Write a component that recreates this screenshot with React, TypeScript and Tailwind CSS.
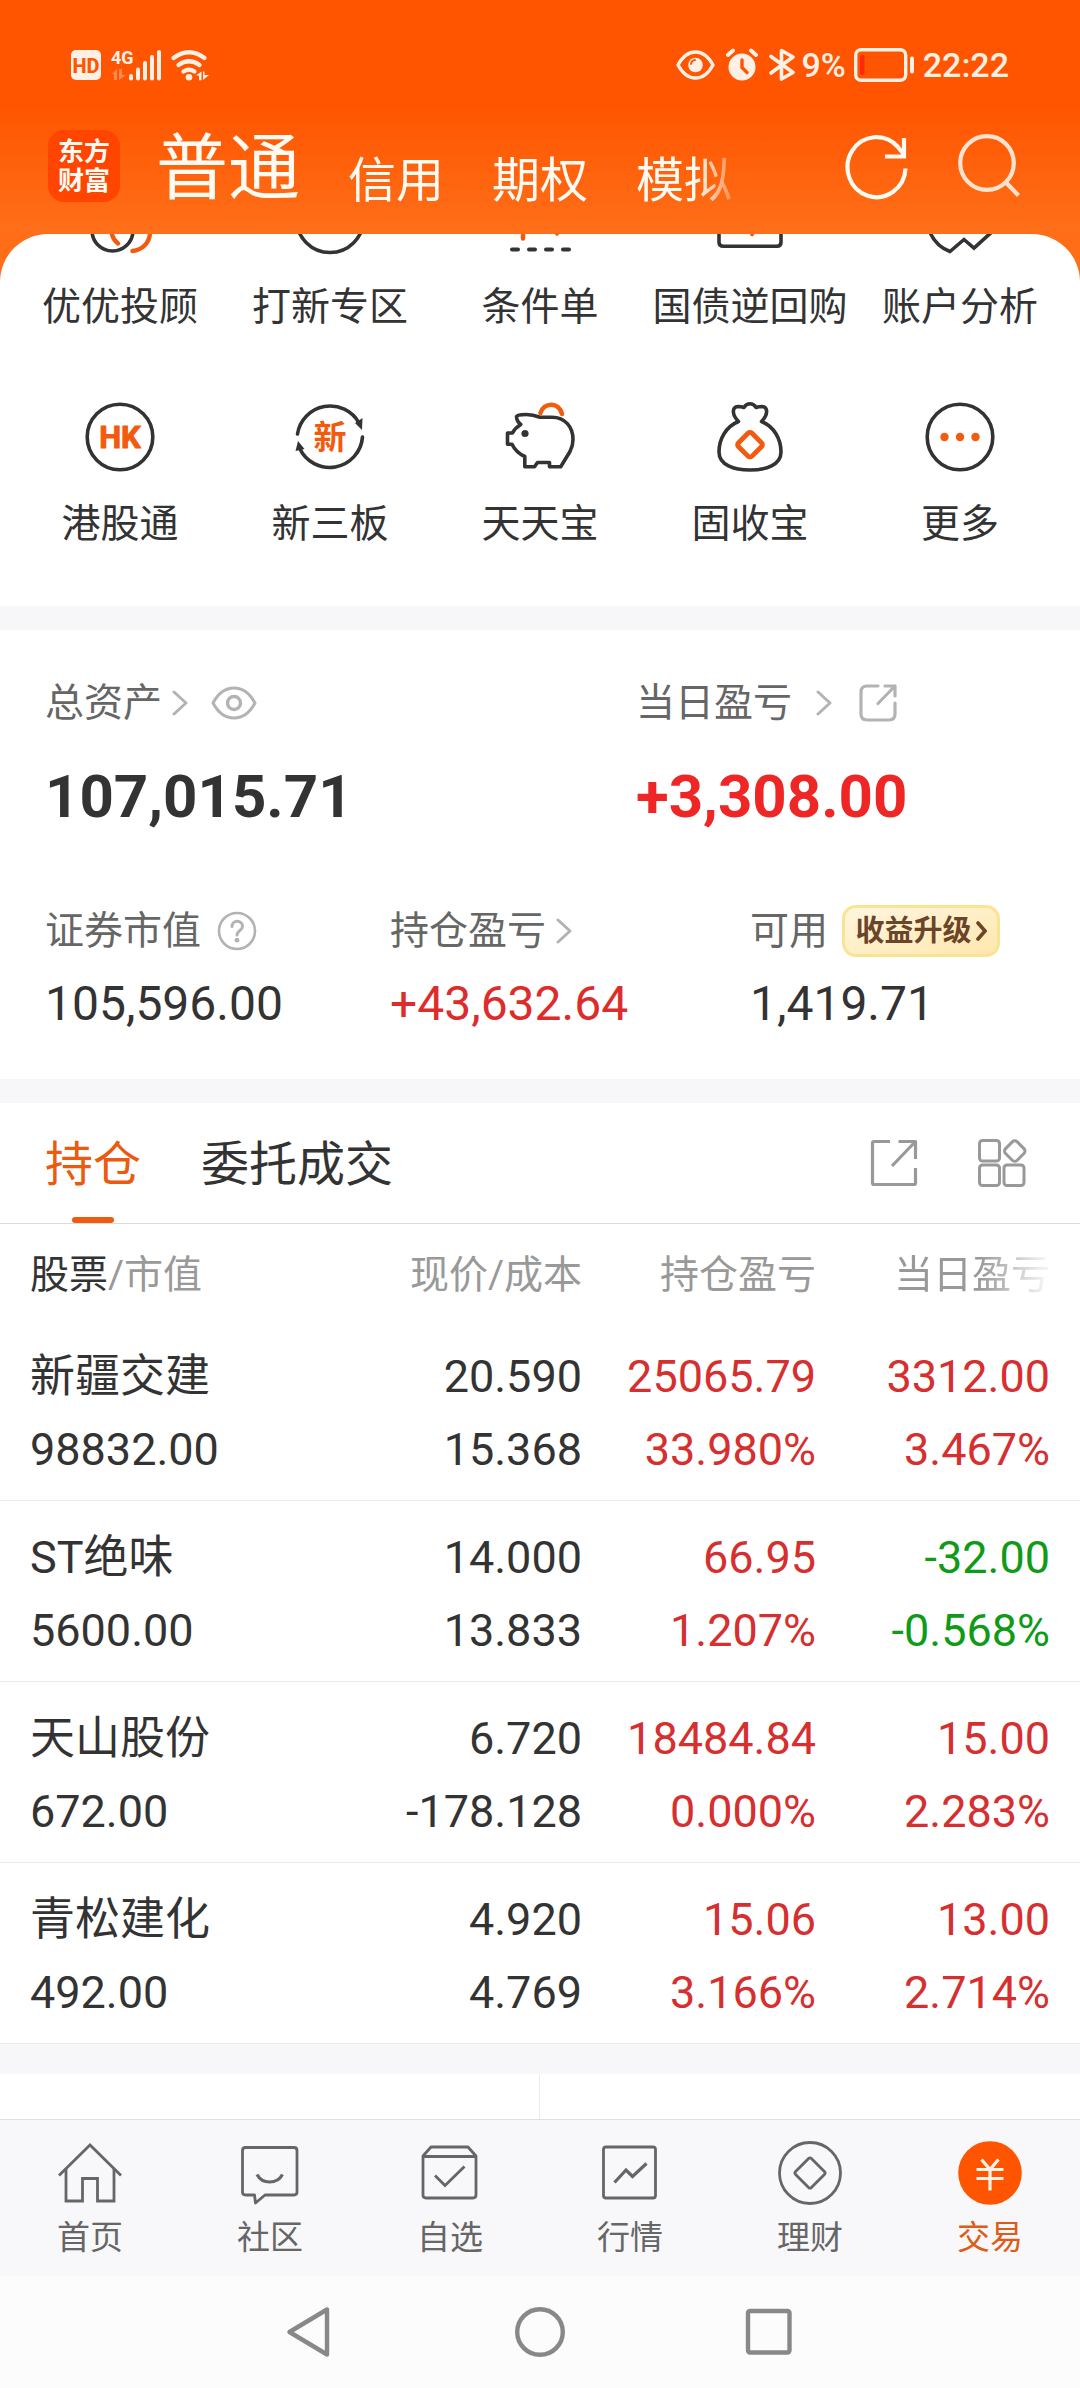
import React, { ReactNode } from "react";

const INK = "#333333";
const ORANGE = "#f25a0e";

/* ---------- status bar ---------- */

function StatusBar() {
  return (
    <div className="flex h-8 items-center justify-between pr-[71px] pl-[71px] text-[34px] leading-8 font-medium text-[#fff0e6]">
      <div className="flex items-center">
        <svg className="overflow-visible" width="138" height="32" viewBox="0 0 138 32" fill="#fff0e6" aria-label="HD 4G">
          <rect x="0" y="1" width="30" height="30" rx="5" />
          <text x="15" y="23.5" textAnchor="middle" fontFamily="Roboto" fontWeight="800" fontSize="20" fill="#ff5500">HD</text>
          <text x="40" y="15" fontFamily="Roboto" fontWeight="700" fontSize="18">4G</text>
          <g opacity="0.35">
            <path d="M41 25l5-5v11h-3v-6zM48 20h3v6h4l-7 5z" />
          </g>
          <rect x="58" y="25" width="4" height="6.5" rx="2" />
          <rect x="65" y="18.5" width="4" height="13" rx="2" />
          <rect x="72" y="12" width="4" height="19.5" rx="2" />
          <rect x="79" y="6" width="4" height="25.5" rx="2" />
          <rect x="86" y="1" width="4" height="30.5" rx="2" />
          <g fill="none" stroke="#fff0e6" strokeWidth="4.2" strokeLinecap="round">
            <path d="M102.5 9Q118 -2.5 133.5 9" />
            <path d="M107.500 16Q118 8.5 128.5 16" />
            <path d="M112.500 22.5Q118 19 123.5 22.5" />
          </g>
          <circle cx="118" cy="28.3" r="3.3" />
          <path d="M125 26.5l5.5-4v8.8h-2.5v-4.8zM132 22.5h1.5v3.500h4.5l-6 5z" />
        </svg>
      </div>
      <div className="flex items-center">
        <svg width="119" height="34" viewBox="0 0 119 34" aria-label="状态">
          <path d="M2 17Q9 4 19.5 4T37 17Q30 30 19.5 30T2 17z" fill="none" stroke="#fff0e6" strokeWidth="3.4" strokeLinejoin="round" />
          <circle cx="19.5" cy="17" r="7.3" fill="#fff0e6" />
          <path d="M15 16a4.5 4.5 0 0 1 4-4" fill="none" stroke="#ff5500" strokeWidth="1.8" strokeLinecap="round" />
          <circle cx="66" cy="19" r="13.5" fill="#fff0e6" />
          <path d="M52 7l5-4.5M80 7l-5-4.5" stroke="#fff0e6" strokeWidth="4" strokeLinecap="round" />
          <path d="M66 12v7.5l5 5" fill="none" stroke="#ff5500" strokeWidth="3.4" strokeLinecap="round" />
          <path d="M95 8.5l22 16L105.5 31V2.5L117 9 95 25" fill="none" stroke="#fff0e6" strokeWidth="3.6" strokeLinejoin="round" strokeLinecap="round" />
        </svg>
        <span className="ml-1.5">9%</span>
        <svg className="mr-2 ml-2" width="61" height="34" viewBox="0 0 61 34" aria-label="电池">
          <rect x="1.7" y="1.7" width="50" height="30.6" rx="5.5" fill="none" stroke="#fff0e6" strokeWidth="3.4" />
          <rect x="6" y="7" width="4.5" height="20" rx="2" fill="#ff2a0a" />
          <rect x="56" y="8.5" width="4" height="17" rx="2" fill="#fff0e6" />
        </svg>
        <span>22:22</span>
      </div>
    </div>
  );
}

function Header() {
  return (
    <header className="bg-[linear-gradient(to_bottom,#ff5500_45%,#ff6f19_100%)] pt-[49px]">
      <StatusBar />
      <div className="mt-[49px] flex h-[104px] items-start pr-[59px] pl-12 text-[#fffaf2]">
        <a href="#home" className="flex size-[72px] shrink-0 items-center justify-center rounded-[16px] bg-[#ff4500] pb-1 font-['Noto_Sans_CJK_SC',sans-serif] text-[26px] leading-[29px] font-bold">
          <span className="w-[52px] break-all">东方财富</span>
        </a>
        <nav className="ml-9 flex h-[75px] w-[580px] items-end gap-12 whitespace-nowrap [mask-image:linear-gradient(to_right,#000_540px,transparent_590px)]">
          <button className="text-[72px] leading-[72px]">普通</button>
          <button className="text-[48px] leading-[48px]">信用</button>
          <button className="text-[48px] leading-[48px]">期权</button>
          <button className="text-[48px] leading-[48px]">模拟</button>
        </nav>
        <div className="ml-auto flex items-center gap-12 pt-1">
          <button aria-label="刷新">
            <svg width="64" height="66" viewBox="0 0 64 66" fill="none" stroke="#fffaf2" strokeWidth="4.2">
              <path d="M60.500 34.5A29 30 0 1 1 53 13L58.500 20" />
              <path d="M59 4v18.500H40" />
            </svg>
          </button>
          <button aria-label="搜索">
            <svg width="64" height="66" viewBox="0 0 64 66" fill="none" stroke="#ffe3cf" strokeWidth="4.2">
              <circle cx="30" cy="29" r="26.8" />
              <path d="M48.5 48L61.5 61.5" />
            </svg>
          </button>
        </div>
      </div>
    </header>
  );
}

/* ---------- shortcut grid ---------- */

function ClippedIcon({ children }: { children: ReactNode }) {
  return (
    <svg width="72" height="21" viewBox="0 0 72 21" fill="none" stroke={INK} strokeWidth="3.6" strokeLinecap="round" strokeLinejoin="round" aria-hidden="true">
      {children}
    </svg>
  );
}

function GridIcon({ children }: { children: ReactNode }) {
  return (
    <svg width="72" height="72" viewBox="0 0 72 72" fill="none" stroke={INK} strokeWidth="3.6" strokeLinecap="round" strokeLinejoin="round" aria-hidden="true">
      {children}
    </svg>
  );
}

const topShortcuts: { label: string; icon: ReactNode }[] = [
  {
    label: "优优投顾",
    icon: (
      <ClippedIcon>
        <path d="M66 -2C66 9 58 16 48.5 17" stroke={ORANGE} strokeWidth="4.4" />
        <path d="M27.5 -2Q28.5 5.5 34 9.5" stroke={ORANGE} strokeWidth="4.4" />
        <circle cx="28.5" cy="-3.5" r="20.5" />
      </ClippedIcon>
    ),
  },
  {
    label: "打新专区",
    icon: (
      <ClippedIcon>
        <circle cx="36" cy="-15" r="33.5" />
      </ClippedIcon>
    ),
  },
  {
    label: "条件单",
    icon: (
      <ClippedIcon>
        <path d="M19 -4v8.500M53 -4v3.500" stroke={ORANGE} strokeWidth="4.5" />
        <path d="M8 15.5h6M25 15.5h6M42 15.5h6M59 15.5h6" strokeWidth="4" />
      </ClippedIcon>
    ),
  },
  {
    label: "国债逆回购",
    icon: (
      <ClippedIcon>
        <path d="M5 -4V8Q5 12.2 9.5 12.2H63Q67 12.2 67 8V-4" />
        <path d="M41 -3l-3 3.500" stroke={ORANGE} />
      </ClippedIcon>
    ),
  },
  {
    label: "账户分析",
    icon: (
      <ClippedIcon>
        <path d="M5 -4Q11 12 26 17.500L40 5.5 50 14 70 -4" strokeLinejoin="miter" />
      </ClippedIcon>
    ),
  },
];

const shortcuts: { label: string; icon: ReactNode }[] = [
  {
    label: "港股通",
    icon: (
      <GridIcon>
        <circle cx="36" cy="36" r="32.8" />
        <text x="36" y="47" textAnchor="middle" fontFamily="Roboto" fontWeight="700" fontSize="31" fill={ORANGE} stroke={ORANGE} strokeWidth="1">HK</text>
      </GridIcon>
    ),
  },
  {
    label: "新三板",
    icon: (
      <GridIcon>
        <path d="M3.5 33A33 33 0 0 1 65 22M68.5 36A33 33 0 0 1 5.5 47" />
        <path d="M61 22l7.500-5-.5 12zM1.500 50l2.500-10 6.500 8z" fill={INK} stroke="none" />
        <text x="36" y="47.5" textAnchor="middle" fontFamily="Noto Sans CJK SC" fontWeight="700" fontSize="33" fill={ORANGE} stroke="none">新</text>
      </GridIcon>
    ),
  },
  {
    label: "天天宝",
    icon: (
      <GridIcon>
        <path d="M36 16.2Q29 13.5 22 13.5 12.5 13.5 12.5 15.5 12.5 20 16.7 23.5 11 27 8.5 32H3.500V43.2H8Q12 51.5 20.8 55.5V65.7H30.500L33.500 61.5H45.500V65.7H56.700L66 50.500Q69 45 69 38.500C69 26 61 16.2 48 16.2z" />
        <path d="M36.5 12C39.5 1 55 0.5 58 13" stroke={ORANGE} strokeWidth="4.6" />
        <circle cx="21" cy="32.5" r="3.6" fill={INK} stroke="none" />
      </GridIcon>
    ),
  },
  {
    label: "固收宝",
    icon: (
      <GridIcon>
        <path d="M24.5 20.5C18 14 17.5 6 24 5.5Q27 5.5 30 6.5 32 2.8 36 2.8T42 6.5Q45 5.5 48 5.5C54.5 6 54 14 47.5 20.5C60 25.5 67 38 67 51C67 64 52 69 36 69S5 64 5 51C5 38 12 25.5 24.5 20.5z" />
        <rect x="26.5" y="34.2" width="19" height="19" rx="2.5" transform="rotate(45 36 43.7)" stroke={ORANGE} strokeWidth="4.8" />
      </GridIcon>
    ),
  },
  {
    label: "更多",
    icon: (
      <GridIcon>
        <circle cx="36" cy="36" r="32.8" />
        <g fill={ORANGE} stroke="none">
          <circle cx="20.5" cy="36" r="4.2" />
          <circle cx="36" cy="36" r="4.2" />
          <circle cx="51.5" cy="36" r="4.2" />
        </g>
      </GridIcon>
    ),
  },
];

function Shortcuts() {
  return (
    <section className="overflow-hidden rounded-t-[48px] bg-white px-[15px] pb-[58px] text-[39px] leading-12 text-[#333]">
      <div className="grid grid-cols-5">
        {topShortcuts.map((s) => (
          <button key={s.label} className="flex flex-col items-center gap-7 whitespace-nowrap">
            {s.icon}
            <span>{s.label}</span>
          </button>
        ))}
      </div>
      <div className="mt-[70px] grid grid-cols-5">
        {shortcuts.map((s) => (
          <button key={s.label} className="flex flex-col items-center gap-[27px] whitespace-nowrap">
            {s.icon}
            <span>{s.label}</span>
          </button>
        ))}
      </div>
    </section>
  );
}

/* ---------- asset summary ---------- */

function Chevron() {
  return (
    <svg width="16" height="28" viewBox="0 0 16 28" fill="none" stroke="#b3b3b3" strokeWidth="3" strokeLinecap="round" strokeLinejoin="round" aria-hidden="true">
      <path d="M2 3l12 11L2 25" />
    </svg>
  );
}

function Summary() {
  return (
    <section className="bg-white pt-[49px] pb-[51px] pl-[45px] text-[39px] leading-12 text-[#666]">
      <div className="grid grid-cols-[591fr_444fr]">
        <div>
          <div className="flex h-12 items-center">
            <button className="flex items-center gap-[10px]">
              总资产 <Chevron />
            </button>
            <button aria-label="隐藏金额" className="ml-[23px]">
              <svg width="46" height="34" viewBox="0 0 46 34" fill="none" stroke="#b3b3b3" strokeWidth="3">
                <path d="M2 17Q10 2 23 2T44 17Q36 32 23 32T2 17z" strokeLinejoin="round" />
                <circle cx="23" cy="17" r="6.5" strokeWidth="3.4" />
              </svg>
            </button>
          </div>
          <p className="mt-10 text-[60px] leading-[60px] font-bold text-[#333]">107,015.71</p>
        </div>
        <div>
          <div className="flex h-12 items-center">
            <button className="flex items-center gap-6">
              当日盈亏 <Chevron />
            </button>
            <button aria-label="分享盈亏" className="ml-[26px]">
              <svg width="40" height="40" viewBox="0 0 40 40" fill="none" stroke="#b3b3b3" strokeWidth="3.2" strokeLinecap="round" strokeLinejoin="round">
                <path d="M20 3H9Q3 3 3 9V31Q3 37 9 37H31Q37 37 37 31V20" />
                <path d="M27 3H37V13M37 3L20 20.5" />
              </svg>
            </button>
          </div>
          <p className="mt-10 text-[60px] leading-[60px] font-bold text-[#ee2626]">+3,308.00</p>
        </div>
      </div>

      <div className="mt-[78px] grid grid-cols-[345fr_360fr_330fr]">
        <div>
          <div className="flex h-[52px] items-center">
            证券市值
            <button aria-label="说明" className="ml-4">
              <svg width="40" height="40" viewBox="0 0 40 40" fill="none" stroke="#b3b3b3" strokeWidth="2.6" strokeLinecap="round" strokeLinejoin="round">
                <circle cx="20" cy="20" r="18" />
                <path d="M15 15.5C15 8.5 25.5 8.5 25.5 15.5C25.5 19.5 20 19.5 20 24" strokeWidth="3" />
                <circle cx="20" cy="29.2" r="2.4" fill="#b3b3b3" stroke="none" />
              </svg>
            </button>
          </div>
          <p className="mt-[23px] text-[48px] text-[#333]">105,596.00</p>
        </div>
        <div>
          <button className="flex h-[52px] items-center gap-[10px]">
            持仓盈亏 <Chevron />
          </button>
          <p className="mt-[23px] text-[48px] text-[#dd2c2c]">+43,632.64</p>
        </div>
        <div>
          <div className="flex h-[52px] items-center">
            可用
            <button className="ml-[14px] flex h-[52px] w-[158px] items-center justify-center gap-1 rounded-[14px] border-3 border-[#f9e494] bg-linear-to-br from-[#fff6e0] to-[#ffe7ad] text-[29px] leading-8 font-bold whitespace-nowrap text-[#6b4528]">
              收益升级
              <svg width="11" height="22" viewBox="0 0 11 22" fill="none" stroke="#6b4528" strokeWidth="3.6" strokeLinecap="round" aria-hidden="true">
                <path d="M2 3l7 8-7 8" />
              </svg>
            </button>
          </div>
          <p className="mt-[23px] text-[48px] text-[#333]">1,419.71</p>
        </div>
      </div>
    </section>
  );
}

/* ---------- holdings ---------- */

interface Holding {
  name: string;
  value: string;
  price: string;
  cost: string;
  gain: string;
  gainPct: string;
  day: string;
  dayPct: string;
}

const holdings: Holding[] = [
  { name: "新疆交建", value: "98832.00", price: "20.590", cost: "15.368", gain: "25065.79", gainPct: "33.980%", day: "3312.00", dayPct: "3.467%" },
  { name: "ST绝味", value: "5600.00", price: "14.000", cost: "13.833", gain: "66.95", gainPct: "1.207%", day: "-32.00", dayPct: "-0.568%" },
  { name: "天山股份", value: "672.00", price: "6.720", cost: "-178.128", gain: "18484.84", gainPct: "0.000%", day: "15.00", dayPct: "2.283%" },
  { name: "青松建化", value: "492.00", price: "4.920", cost: "4.769", gain: "15.06", gainPct: "3.166%", day: "13.00", dayPct: "2.714%" },
];

function Holdings() {
  return (
    <section className="bg-white">
      <div className="flex h-[121px] items-stretch border-b border-[#dcdcdc] pr-[53px] pl-[45px] text-[48px] text-[#333]">
        <button className="relative pt-1 text-[#ea5a10]">
          持仓
          <span className="absolute bottom-0 left-[27px] h-[6px] w-[42px] rounded-full bg-[#ef5a10]" />
        </button>
        <button className="ml-[60px] pt-1">委托成交</button>
        <div className="ml-auto flex items-center gap-[59px]">
          <button aria-label="分享持仓">
            <svg width="48" height="48" viewBox="0 0 48 48" fill="none" stroke="#999" strokeWidth="3.2" strokeLinejoin="round">
              <path d="M20 2.5H4Q2.5 2.5 2.5 4V44Q2.5 45.5 4 45.5H44Q45.5 45.5 45.5 44V29" />
              <path d="M28.5 2.5H45.500V20M44.5 3.500L22 27" />
            </svg>
          </button>
          <button aria-label="更多功能">
            <svg width="50" height="50" viewBox="0 0 50 50" fill="none" stroke="#999" strokeWidth="3">
              <rect x="2.5" y="2.5" width="20" height="20.5" rx="3" />
              <rect x="2.5" y="27" width="20" height="20.5" rx="3" />
              <rect x="27" y="27" width="20" height="20.5" rx="3" />
              <rect x="29.5" y="4.8" width="16.5" height="16.5" rx="3.5" transform="rotate(45 37.75 13.05)" />
            </svg>
          </button>
        </div>
      </div>

      <table className="w-full table-fixed border-separate border-spacing-0 text-right text-[#333]">
        <colgroup>
          <col />
          <col className="w-[231px]" />
          <col className="w-[234px]" />
          <col className="w-[264px]" />
        </colgroup>
        <thead className="text-[39px] leading-12 whitespace-nowrap text-[#999]">
          <tr>
            <th className="pt-[27px] pb-[21px] pl-[30px] text-left font-normal">
              <span className="text-[#333]">股票</span>/市值
            </th>
            <th className="pt-[27px] pb-[21px] font-normal">现价/成本</th>
            <th className="pt-[27px] pb-[21px] font-normal">持仓盈亏</th>
            <th className="pt-[27px] pr-[30px] pb-[21px] font-normal">
              <span className="[mask-image:linear-gradient(to_right,#000_55%,rgba(0,0,0,0.15)_95%)]">当日盈亏</span>
            </th>
          </tr>
        </thead>
        <tbody className="text-[45px] leading-[73px] whitespace-nowrap">
          {holdings.map((h) => (
            <tr key={h.name}>
              <td className="border-b border-[#ebebeb] pt-5 pb-[14px] pl-[30px] text-left">
                <div>{h.name}</div>
                <div>{h.value}</div>
              </td>
              <td className="border-b border-[#ebebeb] pt-5 pb-[14px]">
                <div>{h.price}</div>
                <div>{h.cost}</div>
              </td>
              <td className="border-b border-[#ebebeb] pt-5 pb-[14px] text-[#d62f2f]">
                <div>{h.gain}</div>
                <div>{h.gainPct}</div>
              </td>
              <td className={h.day.startsWith("-") ? "border-b border-[#ebebeb] pt-5 pr-[30px] pb-[14px] text-[#0f9b17]" : "border-b border-[#ebebeb] pt-5 pr-[30px] pb-[14px] text-[#d62f2f]"}>
                <div>{h.day}</div>
                <div>{h.dayPct}</div>
              </td>
            </tr>
          ))}
        </tbody>
      </table>
    </section>
  );
}

/* ---------- bottom tabs ---------- */

const tabs: { label: string; icon: ReactNode; active?: boolean }[] = [
  {
    label: "首页",
    icon: (
      <>
        <path d="M1 34.5L32 4 63 34.5" />
        <path d="M8 28V60H24.500V37.5H39.500V60H56V28" />
      </>
    ),
  },
  {
    label: "社区",
    icon: (
      <>
        <path d="M16.5 54H7.500Q4.5 54 4.5 51V9.500Q4.5 6.5 7.5 6.5H56Q59 6.5 59 9.500V51Q59 54 56 54H27L17.500 62z" strokeLinejoin="round" />
        <path d="M19 33.5Q23 41 31.7 41T44.5 33.5" strokeWidth="3.2" />
      </>
    ),
  },
  {
    label: "自选",
    icon: (
      <>
        <path d="M5 15L13 6H50L58 15V54Q58 57 55 57H8Q5 57 5 54zM5 15.5H58" strokeLinejoin="round" />
        <path d="M17 34.5L27 44.5 46.5 25.5" />
      </>
    ),
  },
  {
    label: "行情",
    icon: (
      <>
        <rect x="5.5" y="6" width="52" height="51" rx="2.5" />
        <path d="M16.5 41.5L28 29 34.5 35.5 48.5 22.5" strokeWidth="3.2" />
      </>
    ),
  },
  {
    label: "理财",
    icon: (
      <>
        <circle cx="32" cy="32" r="30.5" />
        <rect x="20.8" y="20.8" width="22.4" height="22.4" rx="2" transform="rotate(45 32 32)" />
      </>
    ),
  },
  {
    label: "交易",
    active: true,
    icon: (
      <>
        <circle cx="32" cy="32" r="31.8" fill="#ff5500" stroke="none" />
        <path d="M23.5 18.5L32 28.5 40.5 18.5M18.5 28.5H45.500M18.5 37.5H45.500M32 28V49.5" stroke="#fff3e8" strokeWidth="3.2" />
      </>
    ),
  },
];

function TabBar() {
  return (
    <nav className="grid grid-cols-6 border-t border-[#e0e0e0] bg-[#f8f8fa] pt-[21px] pb-[18px] text-[33px] leading-10 text-[#666]">
      {tabs.map((t) => (
        <button key={t.label} aria-current={t.active ? "page" : undefined} className={t.active ? "flex flex-col items-center gap-[13px] text-[#dc5c18]" : "flex flex-col items-center gap-[13px]"}>
          <svg width="64" height="64" viewBox="0 0 64 64" fill="none" stroke="#666" strokeWidth="2.8" aria-hidden="true">
            {t.icon}
          </svg>
          <span>{t.label}</span>
        </button>
      ))}
    </nav>
  );
}

function SystemNav() {
  return (
    <div className="flex h-28 items-center justify-center gap-[178px] bg-[#fcfcfc]">
      <button aria-label="返回">
        <svg width="52" height="52" viewBox="0 0 52 52" fill="none" stroke="#888" strokeWidth="4.4" strokeLinejoin="round">
          <path d="M5.5 26L43 3.500V48.5z" />
        </svg>
      </button>
      <button aria-label="主屏幕">
        <svg width="52" height="52" viewBox="0 0 52 52" fill="none" stroke="#888" strokeWidth="4.4">
          <circle cx="26" cy="26" r="22.8" />
        </svg>
      </button>
      <button aria-label="最近任务">
        <svg width="52" height="52" viewBox="0 0 52 52" fill="none" stroke="#888" strokeWidth="4.4">
          <rect x="4" y="5" width="41.5" height="41.5" rx="2" />
        </svg>
      </button>
    </div>
  );
}

export default function App() {
  return (
    <div className="flex min-h-screen w-full flex-col bg-[#f7f7fa] font-[Roboto,'Noto_Sans_CJK_SC',sans-serif]">
      <Header />
      <main className="flex flex-1 flex-col">
        <div className="bg-[#ff6d16]">
          <Shortcuts />
        </div>
        <div className="mt-6">
          <Summary />
        </div>
        <div className="mt-6">
          <Holdings />
        </div>
        <div className="mt-[30px] grid min-h-11 flex-1 grid-cols-2 bg-white">
          <div className="border-r border-[#ebebeb]" />
        </div>
      </main>
      <TabBar />
      <SystemNav />
    </div>
  );
}
